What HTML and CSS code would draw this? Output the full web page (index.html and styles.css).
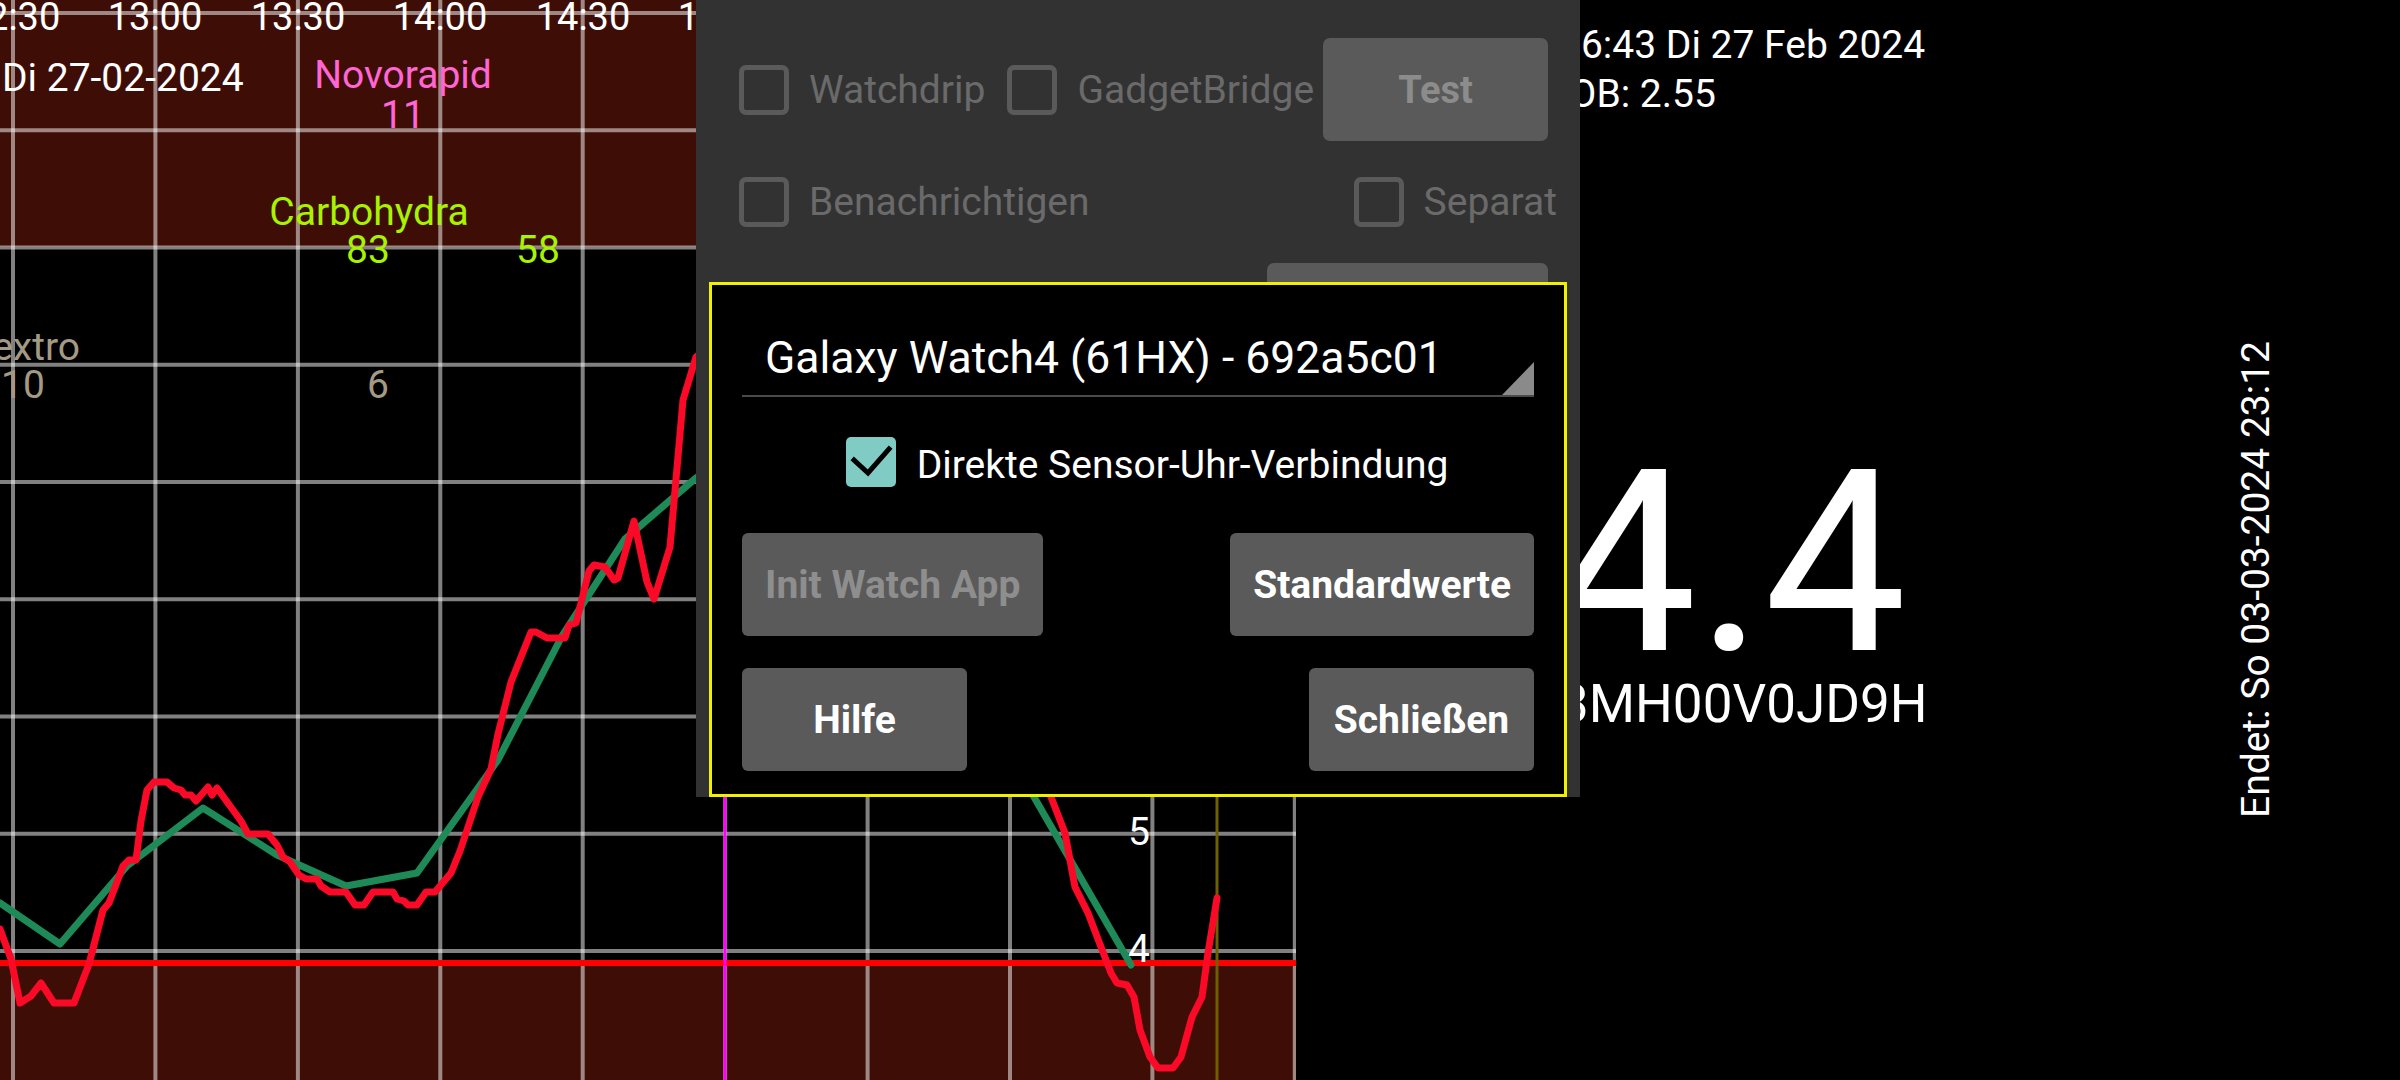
FILE: index.html
```html
<!DOCTYPE html>
<html lang="de">
<head>
<meta charset="utf-8">
<title>Juggluco</title>
<link rel="stylesheet" href="styles.css">
</head>
<body>
<div class="screen">
  <div class="graph">
    <svg width="1296" height="1080" viewBox="0 0 1296 1080">
      <rect x="0" y="0" width="1296" height="1080" fill="#000"/>
      <rect x="0" y="0" width="1296" height="247" fill="#3e0e06"/>
      <rect x="0" y="963" width="1296" height="117" fill="#3e0e06"/>
      <g stroke="#ffffff" stroke-opacity="0.5" stroke-width="4">
        <line x1="13" y1="0" x2="13" y2="1080"/>
        <line x1="155.4" y1="0" x2="155.4" y2="1080"/>
        <line x1="297.9" y1="0" x2="297.9" y2="1080"/>
        <line x1="440.3" y1="0" x2="440.3" y2="1080"/>
        <line x1="582.7" y1="0" x2="582.7" y2="1080"/>
        <line x1="725.1" y1="0" x2="725.1" y2="1080"/>
        <line x1="867.6" y1="0" x2="867.6" y2="1080"/>
        <line x1="1010" y1="0" x2="1010" y2="1080"/>
        <line x1="1152.4" y1="0" x2="1152.4" y2="1080"/>
        <line x1="1294.8" y1="0" x2="1294.8" y2="1080"/>
        <line x1="0" y1="13" x2="1296" y2="13"/>
        <line x1="0" y1="130.3" x2="1296" y2="130.3"/>
        <line x1="0" y1="247.5" x2="1296" y2="247.5"/>
        <line x1="0" y1="364.8" x2="1296" y2="364.8"/>
        <line x1="0" y1="482" x2="1296" y2="482"/>
        <line x1="0" y1="599.3" x2="1296" y2="599.3"/>
        <line x1="0" y1="716.5" x2="1296" y2="716.5"/>
        <line x1="0" y1="833.8" x2="1296" y2="833.8"/>
        <line x1="0" y1="951" x2="1296" y2="951"/>
      </g>
      <line x1="0" y1="963" x2="1296" y2="963" stroke="#ff0000" stroke-width="6"/>
      <line x1="725" y1="0" x2="725" y2="1080" stroke="#ff00ff" stroke-width="3"/>
      <line x1="1217" y1="0" x2="1217" y2="1080" stroke="#6e6000" stroke-width="3"/>
      <polyline fill="none" stroke="#1e8a58" stroke-width="7" stroke-linejoin="round" stroke-linecap="round"
        points="0,903 60,944 127,866 203,808 277,855 346,886 417,873 498,760 562,636 625,539 696,478 800,400 900,560 1034,797 1131,965"/>
      <polyline fill="none" stroke="#fa0a26" stroke-width="7" stroke-linejoin="round" stroke-linecap="round"
        points="0,929 11,959 20,1003 31,996 41,983 54,1003 74,1003 89,964 103,910 109,903 123,866 129,860 136,860 141,821 147,790 154,782 167,782 174,788 181,790 185,795 191,795 196,801 208,787 212,795 217,788 241,821 248,834 268,834 277,845 283,857 290,862 299,875 306,879 317,879 321,886 330,892 346,892 355,905 364,905 373,892 393,892 397,899 404,901 408,905 417,905 426,892 435,892 451,873 460,851 478,797 491,769 498,734 511,682 531,632 536,632 547,638 565,638 569,625 576,623 583,595 589,571 594,565 605,567 614,580 618,578 634,521 647,582 654,599 670,547 683,400 696,357 760,300 900,450 1000,600 1051,797 1065,833 1075,887 1088,913 1111,973 1117,983 1127,985 1134,997 1140,1030 1150,1057 1158,1068 1173,1068 1181,1057 1192,1017 1202,997 1208,953 1217,898"/>
      <g class="axis" font-size="38" fill="#ffffff" text-anchor="middle">
        <text x="13" y="30">12:30</text>
        <text x="155" y="30">13:00</text>
        <text x="298" y="30">13:30</text>
        <text x="440" y="30">14:00</text>
        <text x="583" y="30">14:30</text>
        <text x="725" y="30">15:00</text>
      </g>
      <text class="axis" x="2" y="91" font-size="39" fill="#ffffff">Di 27-02-2024</text>
      <g class="axis" font-size="39" fill="#ff66d4" text-anchor="middle">
        <text x="403" y="88">Novorapid</text>
        <text x="403" y="128">11</text>
      </g>
      <g class="axis" font-size="39" fill="#a8f400" text-anchor="middle">
        <text x="369" y="225">Carbohydra</text>
        <text x="368" y="263">83</text>
        <text x="538" y="263">58</text>
      </g>
      <g class="axis" font-size="39" fill="#a49a84" text-anchor="middle">
        <text x="80" y="360" text-anchor="end">Dextro</text>
        <text x="23" y="398">10</text>
        <text x="378" y="398">6</text>
      </g>
      <g class="axis" font-size="39" fill="#ffffff">
        <text x="1128" y="845">5</text>
        <text x="1128" y="962">4</text>
      </g>
    </svg>
  </div>
  <div class="info">
    <div class="readings">
      <div class="status">16:43 Di 27 Feb 2024</div>
      <div class="status">IOB: 2.55</div>
      <div class="glucose">4.4</div>
      <div class="serial">3MH00V0JD9H</div>
    </div>
    <div class="expiry">Endet: So 03-03-2024 23:12</div>
  </div>

  <div class="panel">
    <div class="prow prow1">
      <label class="chk first"><span class="box"></span>Watchdrip</label>
      <label class="chk second"><span class="box"></span>GadgetBridge</label>
      <div class="pbtn">Test</div>
    </div>
    <div class="prow prow2">
      <label class="chk"><span class="box"></span>Benachrichtigen</label>
      <label class="chk"><span class="box"></span>Separat</label>
    </div>
    <div class="prow prow3">
      <div class="pbtn wide"></div>
    </div>

    <div class="dialog">
      <div class="spinner">Galaxy Watch4 (61HX) - 692a5c01</div>
      <div class="direct">
        <span class="cbox">
          <svg width="50" height="50" viewBox="0 0 50 50"><polyline points="8,23 22,36 43,12" fill="none" stroke="#000" stroke-width="5" stroke-linecap="square"/></svg>
        </span>
        <span class="direct-label">Direkte Sensor-Uhr-Verbindung</span>
      </div>
      <div class="drow drow1">
        <div class="dbtn disabled">Init Watch App</div>
        <div class="dbtn">Standardwerte</div>
      </div>
      <div class="drow drow2">
        <div class="dbtn">Hilfe</div>
        <div class="dbtn">Schließen</div>
      </div>
    </div>
  </div>
</div>
</body>
</html>
```
FILE: styles.css
```css
* { box-sizing: border-box; }
html, body { margin: 0; padding: 0; }
body {
  width: 2400px;
  height: 1080px;
  overflow: hidden;
  background: #000;
  color: #fff;
  font-family: Roboto, "Noto Sans", sans-serif;
}
.screen {
  position: relative;
  display: flex;
  width: 2400px;
  height: 1080px;
}
.graph { flex: 0 0 1296px; height: 1080px; }
.graph svg { display: block; }
.axis { font-family: Roboto, sans-serif; }

.info {
  flex: 1;
  display: flex;
  padding-left: 263px;
}
.readings { flex: 1; padding-top: 21px; }
.status { font-size: 39px; line-height: 49px; white-space: nowrap; }
.glucose { margin-top: 344px; font-size: 254px; line-height: 200px; margin-left: -5px; }
.serial { margin-top: 15px; font-size: 53px; line-height: 53px; white-space: nowrap; }
.expiry {
  writing-mode: vertical-rl;
  transform: rotate(180deg);
  align-self: flex-start;
  margin-top: 341px;
  margin-right: 124px;
  font-size: 39px;
  line-height: 39px;
  white-space: nowrap;
}

.panel {
  position: absolute;
  left: 696px;
  top: 0;
  width: 884px;
  height: 797px;
  background: #323232;
  padding-top: 38px;
}
.prow { display: flex; align-items: center; }
.prow1 { height: 103px; padding-left: 43px; padding-right: 32px; }
.prow1 .first { margin-right: 22px; }
.prow1 .second { margin-right: 8px; }
.prow2 { height: 50px; margin-top: 36px; padding-left: 43px; padding-right: 23px; justify-content: space-between; }
.prow3 { height: 103px; margin-top: 36px; padding-right: 32px; justify-content: flex-end; }
.chk {
  flex-shrink: 0;
  display: flex;
  align-items: center;
  gap: 20px;
  font-size: 39px;
  color: #6a6a6a;
  white-space: nowrap;
}
.box {
  width: 50px;
  height: 50px;
  border: 5px solid #5a5a5a;
  border-radius: 7px;
}
.pbtn {
  flex-shrink: 0;
  margin-left: auto;
  width: 225px;
  height: 103px;
  border-radius: 7px;
  background: #5a5a5a;
  color: #8c8c8c;
  font-weight: 700;
  font-size: 38px;
  display: flex;
  align-items: center;
  justify-content: center;
}
.pbtn.wide { width: 281px; }

.dialog {
  position: absolute;
  left: 13px;
  top: 282px;
  width: 858px;
  height: 515px;
  border: 3px solid #f0f000;
  background: #000;
  padding: 0 30px;
}
.spinner {
  position: relative;
  margin-top: 51px;
  padding-left: 23px;
  padding-bottom: 15px;
  font-size: 44.5px;
  line-height: 44px;
  border-bottom: 2px solid #4a4a4a;
  white-space: nowrap;
}
.spinner::after {
  content: "";
  position: absolute;
  right: 0;
  bottom: 0;
  width: 32px;
  height: 33px;
  background: #8a8a8a;
  clip-path: polygon(100% 0, 100% 100%, 0 100%);
}
.direct {
  display: flex;
  align-items: center;
  justify-content: center;
  gap: 21px;
  margin-top: 40px;
  height: 50px;
  padding-left: 18px;
  font-size: 39px;
  white-space: nowrap;
}
.direct-label { margin-top: 6px; }
.cbox {
  width: 50px;
  height: 50px;
  border-radius: 5px;
  background: #80cbc4;
  display: block;
}
.cbox svg { display: block; }
.drow { display: flex; justify-content: space-between; }
.drow1 { margin-top: 46px; }
.drow2 { margin-top: 32px; }
.dbtn {
  height: 103px;
  min-width: 225px;
  padding: 0 23px;
  border-radius: 6px;
  background: #5a5a5a;
  color: #fff;
  font-weight: 700;
  font-size: 39px;
  display: flex;
  align-items: center;
  justify-content: center;
  white-space: nowrap;
}
.dbtn.disabled { color: #8e8e8e; }
```
